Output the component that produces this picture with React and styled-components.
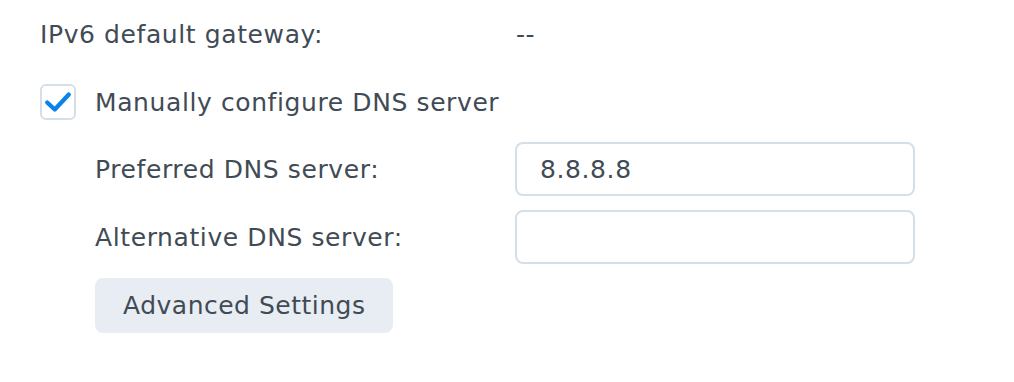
import React from 'react';
import styled, { createGlobalStyle } from 'styled-components';

const GlobalStyle = createGlobalStyle`
  body {
    margin: 0;
    background: #ffffff;
    font-family: "DejaVu Sans", Verdana, sans-serif;
    color: #414b55;
  }
`;

const Panel = styled.div`
  padding: 16px 0 0 40px;
  display: flex;
  flex-direction: column;
  font-size: 25px;
  letter-spacing: 0.6px;
`;

const InfoRow = styled.div`
  display: grid;
  grid-template-columns: 476px 1fr;
  align-items: center;
  height: 36px;
`;

const CheckRow = styled.label`
  display: flex;
  align-items: center;
  gap: 19px;
  margin-top: 32px;
`;

const Box = styled.span`
  width: 36px;
  height: 36px;
  box-sizing: border-box;
  border: 2px solid #d5dfe9;
  border-radius: 6px;
  display: flex;
  align-items: center;
  justify-content: center;
  background: #fff;
`;

const Nested = styled.div`
  padding-left: 55px;
  display: flex;
  flex-direction: column;
  gap: 14px;
  margin-top: 22px;
`;

const FieldRow = styled.div`
  display: grid;
  grid-template-columns: 420px 400px;
  align-items: center;
`;

const Input = styled.input`
  box-sizing: border-box;
  width: 400px;
  height: 54px;
  border: 2px solid #d5dfe9;
  border-radius: 8px;
  padding: 0 23px;
  font-family: "DejaVu Sans", Verdana, sans-serif;
  font-size: 25px;
  letter-spacing: 0.6px;
  color: #414b55;
  outline: none;
`;

const Button = styled.button`
  align-self: flex-start;
  height: 55px;
  padding: 0 28px;
  border: none;
  border-radius: 8px;
  background: #e8edf3;
  font-family: "DejaVu Sans", Verdana, sans-serif;
  font-size: 25px;
  letter-spacing: 0.5px;
  color: #414b55;
`;

export default function App() {
  return (
    <>
      <GlobalStyle />
      <Panel>
        <InfoRow>
          <span>IPv6 default gateway:</span>
          <span>--</span>
        </InfoRow>
        <CheckRow>
          <Box>
            <svg width="28" height="28" viewBox="0 0 26 26">
              <path d="M3 13.5 L10 20 L23 6" fill="none" stroke="#0a84e8" strokeWidth="4" strokeLinecap="round" strokeLinejoin="round" />
            </svg>
          </Box>
          <span>Manually configure DNS server</span>
        </CheckRow>
        <Nested>
          <FieldRow>
            <span>Preferred DNS server:</span>
            <Input defaultValue="8.8.8.8" />
          </FieldRow>
          <FieldRow>
            <span>Alternative DNS server:</span>
            <Input defaultValue="" />
          </FieldRow>
          <Button>Advanced Settings</Button>
        </Nested>
      </Panel>
    </>
  );
}
